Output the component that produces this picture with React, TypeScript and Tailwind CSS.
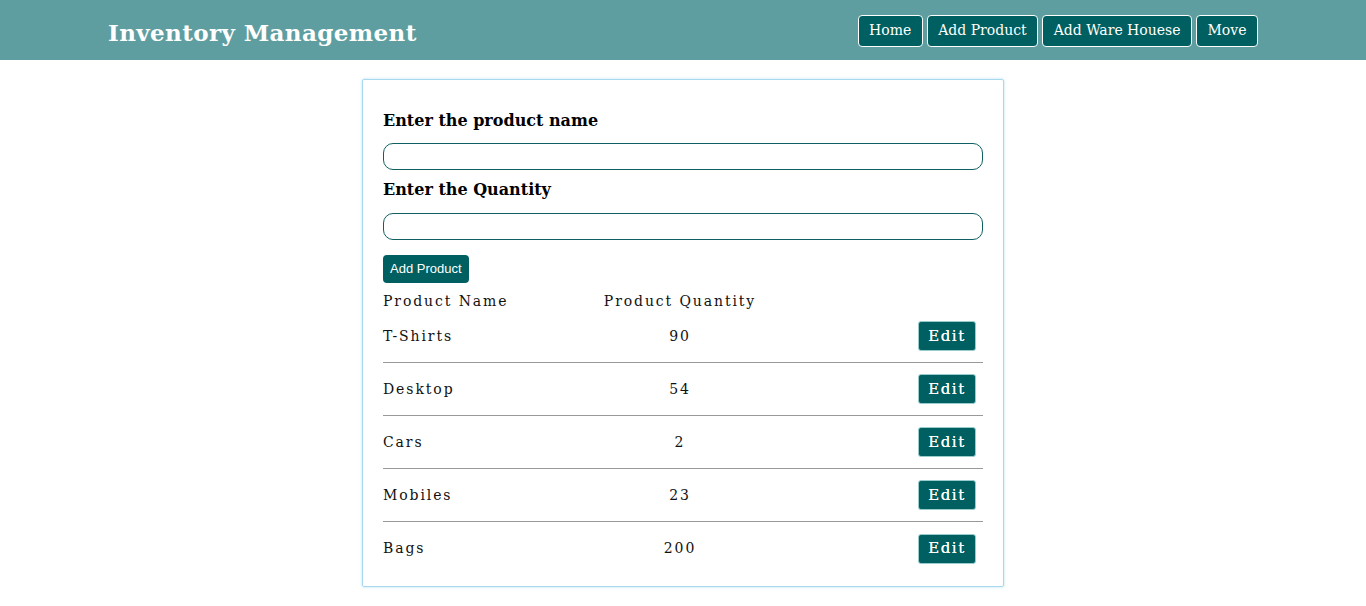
import React from 'react';

const products = [
  { name: 'T-Shirts', qty: 90 },
  { name: 'Desktop', qty: 54 },
  { name: 'Cars', qty: 2 },
  { name: 'Mobiles', qty: 23 },
  { name: 'Bags', qty: 200 },
];

const serif = "font-['DejaVu_Serif',Georgia,serif]";

export default function App() {
  return (
    <div className={`min-h-screen bg-white ${serif}`}>
      {/* Header */}
      <header className="h-[60px] bg-[#5f9ea0] flex items-center justify-between pl-[108px] pr-[108px]">
        <h1 className="text-white text-[23px] font-bold tracking-[0.4px] pt-[6px]">Inventory Management</h1>
        <nav className="flex gap-[4px] pt-[1px]">
          {['Home', 'Add Product', 'Add Ware Houese', 'Move'].map((item) => (
            <button
              key={item}
              className="h-[32px] px-[10.5px] bg-[#005f60] text-white text-[14px] border border-white rounded-[4px] whitespace-nowrap"
            >
              {item}
            </button>
          ))}
        </nav>
      </header>

      {/* Card */}
      <main className="flex justify-center pt-[19px]">
        <div className="w-[642px] border border-[#a8d8ee] shadow-[0_0_3px_rgba(135,206,235,0.6)] rounded-[2px] px-[20px] pt-[29px] pb-[11px]">
          <label className="block text-[16px] font-bold text-black leading-[24px]">Enter the product name</label>
          <input className="mt-[10px] w-full h-[27px] border border-[#0f5f63] rounded-[10px] outline-none" />
          <label className="block mt-[8px] text-[16px] font-bold text-black leading-[24px]">Enter the Quantity</label>
          <input className="mt-[11px] w-full h-[27px] border border-[#0f5f63] rounded-[10px] outline-none" />
          <button className="mt-[15px] h-[28px] px-[7px] bg-[#005f60] text-white text-[13px] rounded-[4px] font-['Liberation_Sans',Arial,sans-serif]">
            Add Product
          </button>

          {/* Table */}
          <div className="mt-[8px] text-[14px] text-[#111] tracking-[1.9px] whitespace-nowrap">
            <div className="grid grid-cols-[220px_154px_1fr] h-[19px] items-center">
              <span>Product Name</span>
              <span className="text-center">Product Quantity</span>
              <span />
            </div>
            {products.map((p, i) => (
              <div
                key={p.name}
                className={`grid grid-cols-[220px_154px_1fr] items-center h-[53px] ${i < products.length - 1 ? 'border-b border-[#999]' : ''}`}
              >
                <span>{p.name}</span>
                <span className="text-center">{p.qty}</span>
                <div className="flex justify-end pr-[7px]">
                  <button className="w-[58px] h-[30px] bg-[#005f60] text-white text-[15px] tracking-[1.5px] rounded-[3px] border border-[#9cc] [text-shadow:0_0_0.4px_#fff]">
                    Edit
                  </button>
                </div>
              </div>
            ))}
          </div>
        </div>
      </main>
    </div>
  );
}
